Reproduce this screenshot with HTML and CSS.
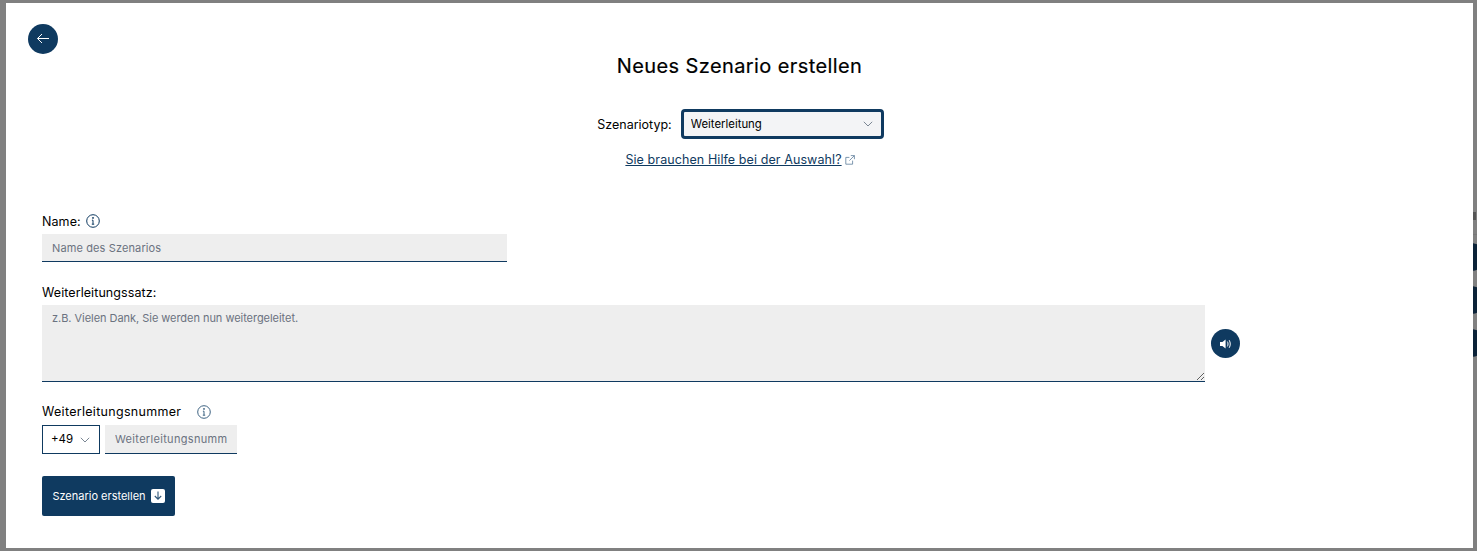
FILE: index.html
```html
<!DOCTYPE html>
<html lang="de">
<head>
<meta charset="utf-8">
<title>Neues Szenario erstellen</title>
<link rel="stylesheet" href="styles.css">
</head>
<body>
<main class="modal">
  <button class="back" type="button" aria-label="Zurück">
    <svg width="14" height="14" viewBox="0 0 14 14" fill="none" stroke="#fff" stroke-width="1"><path d="M13 6.5H1.5M6 2 1.5 6.5 6 11"/></svg>
  </button>
  <h1 class="title">Neues Szenario erstellen</h1>
  <div class="type-row">
    <label class="type-label" for="type">Szenariotyp:</label>
    <div class="select-wrap type-select">
      <select id="type"><option>Weiterleitung</option></select>
      <svg class="chevron" width="10" height="6" viewBox="0 0 10 6" fill="none" stroke="#7b8794"><path d="M.8.8 5 5l4.2-4.2"/></svg>
    </div>
  </div>
  <div class="help">
    <a href="#">Sie brauchen Hilfe bei der Auswahl?</a>
    <svg width="10" height="10" viewBox="0 0 10 10" fill="none" stroke="#5d7e9b" stroke-width=".8"><path d="M7.6 5.6v3.6H.8V2.4h3.6M5.8.6h3.6v3.6M9.4.6 4.4 5.6"/></svg>
  </div>
  <form class="form">
    <div class="label-row name-label">
      <label for="name">Name:</label>
      <svg class="info name-info" width="14" height="14" viewBox="0 0 14 14" fill="none" stroke="#0f3a60"><circle cx="7" cy="7" r="6.3"/><path d="M7 6.2v4M5.8 10.2h2.4M5.9 6.2H7"/><circle cx="7" cy="3.9" r=".5" fill="#0f3a60"/></svg>
    </div>
    <input class="field name-input" id="name" placeholder="Name des Szenarios">
    <label class="label-row sentence-label" for="sentence">Weiterleitungssatz:</label>
    <div class="sentence-row">
      <textarea class="field sentence" id="sentence" placeholder="z.B. Vielen Dank, Sie werden nun weitergeleitet."></textarea>
      <button class="speaker" type="button" aria-label="Anhören">
        <svg width="14" height="12" viewBox="0 0 14 12" fill="none"><path d="M1 4h2.4L6.6 1.4v9.2L3.4 8H1z" fill="#fff"/><path d="M8.4 3.6c.8 1.4.8 3.4 0 4.8M10.2 2.2c1.4 2.2 1.4 5.4 0 7.6" stroke="#fff" stroke-width="1"/></svg>
      </button>
    </div>
    <div class="label-row number-label">
      <label for="number">Weiterleitungsnummer</label>
      <svg class="info" width="14" height="14" viewBox="0 0 14 14" fill="none" stroke="#3f6483"><circle cx="7" cy="7" r="6.3"/><path d="M7 6.2v4M5.8 10.2h2.4M5.9 6.2H7"/><circle cx="7" cy="3.9" r=".5" fill="#3f6483"/></svg>
    </div>
    <div class="number-row">
      <div class="select-wrap prefix">
        <select aria-label="Vorwahl"><option>+49</option></select>
        <svg class="chevron" width="10" height="6" viewBox="0 0 10 6" fill="none" stroke="#7b8794"><path d="M.8.8 5 5l4.2-4.2"/></svg>
      </div>
      <input class="field number" id="number" placeholder="Weiterleitungsnummer">
    </div>
    <button class="submit" type="button">
      <span>Szenario erstellen</span>
      <svg width="14" height="14" viewBox="0 0 14 14"><rect width="14" height="14" rx="2" fill="#fff"/><path d="M7 2.5v7.5M3.8 7 7 10.2 10.2 7" fill="none" stroke="#2f5678" stroke-width="1.1"/></svg>
    </button>
  </form>
</main>
<aside class="peek" aria-hidden="true">
  <span class="peek-mark"></span>
  <span class="peek-dot"></span>
  <span class="peek-dot"></span>
  <span class="peek-dot"></span>
</aside>
</body>
</html>
```
FILE: styles.css
```css
* { box-sizing: border-box; }
html, body { margin: 0; height: 100%; }
body {
  display: flex;
  height: 551px;
  overflow: hidden;
  padding: 3px 0 3px 6px;
  background: #808080;
  font-family: Inter, "Liberation Sans", sans-serif;
  color: #000;
}
.modal {
  width: 1467px;
  height: 545px;
  flex: none;
  background: #fff;
  padding: 21px 36px 0 22px;
  display: flex;
  flex-direction: column;
}
.back {
  width: 30px;
  height: 30px;
  border: 0;
  padding: 0;
  border-radius: 50%;
  background: #0f3a60;
  display: flex;
  align-items: center;
  justify-content: center;
}
.title {
  margin: -1px 0 0 -22px;
  width: 1467px;
  font-size: 20px;
  line-height: 26px;
  font-weight: 400;
  text-align: center;
  letter-spacing: .4px;
  -webkit-text-stroke: .2px #000;
}
.type-row {
  display: flex;
  align-items: center;
  justify-content: center;
  gap: 9px;
  margin: 30px 0 0 -22px;
  padding-left: 2px;
  width: 1467px;
}
.type-label { font-size: 12.5px; }
.select-wrap { position: relative; }
.select-wrap select {
  appearance: none;
  width: 100%;
  height: 100%;
  margin: 0;
  font: inherit;
  color: #000;
}
.chevron { position: absolute; top: 50%; margin-top: -3px; pointer-events: none; }
.type-select { width: 203px; height: 30px; font-size: 11.4px; }
.type-select select {
  background: #f3f4f6;
  border: 3px solid #0f3a60;
  border-radius: 4px;
  padding: 0 0 0 7px;
}
.type-select .chevron { right: 11px; }
.help {
  margin: 12px 0 0 -22px;
  padding-left: 1px;
  width: 1467px;
  display: flex;
  justify-content: center;
  align-items: center;
  gap: 3px;
  font-size: 12.5px;
  line-height: 18px;
  letter-spacing: .09px;
}
.help a { color: #0f3a60; }
.form { display: flex; flex-direction: column; align-items: flex-start; padding-left: 14px; }
.label-row { display: flex; align-items: center; font-size: 12.5px; line-height: 18px; letter-spacing: .08px; }
.name-label { margin-top: 44px; gap: 5px; height: 18px; }
.name-info { margin-bottom: 2px; }
.name-input { width: 465px; height: 28px; margin-top: 3px; letter-spacing: .12px; }
.field {
  border: 0;
  border-bottom: 1px solid #0f3a60;
  border-radius: 0;
  background: #eee;
  font: inherit;
  font-size: 11px;
  padding: 0 10px;
  color: #000;
  outline: 0;
}
.field::placeholder { color: #6b7280; opacity: 1; }
.sentence-label { margin-top: 22px; }
.sentence-row { display: flex; align-items: center; gap: 6px; margin-top: 3px; }
.sentence { width: 1163px; height: 77px; padding: 6px 10px; display: block; letter-spacing: -.04px; }
.speaker {
  width: 29px;
  height: 29px;
  padding: 0;
  border: 0;
  border-radius: 50%;
  background: #0f3a60;
  display: flex;
  align-items: center;
  justify-content: center;
}
.number-label { margin-top: 21px; gap: 16px; letter-spacing: .3px; }
.number-row { display: flex; gap: 5px; margin-top: 4px; height: 29px; }
.prefix { width: 58px; font-size: 11.5px; }
.prefix select {
  background: #fff;
  border: 1px solid #0f3a60;
  border-radius: 0;
  padding: 0 0 2px 8px;
}
.prefix .chevron { right: 10px; }
.number { width: 132px; letter-spacing: .32px; }
.submit {
  margin-top: 22px;
  width: 133px;
  height: 40px;
  border: 0;
  border-radius: 2px;
  background: #0f3a60;
  color: #fff;
  font: inherit;
  font-size: 11px;
  display: flex;
  align-items: center;
  justify-content: center;
  gap: 5px;
  padding: 0;
}
.peek {
  flex: 1;
  display: flex;
  flex-direction: column;
  overflow: hidden;
}
.peek-mark {
  display: block;
  flex: none;
  height: 232px;
  border-bottom: 1px solid #777;
  background: linear-gradient(#555, #555) 0 209px / 3px 8px no-repeat;
}
.peek-dot {
  display: block;
  flex: none;
  width: 28px;
  height: 28px;
  margin: 8px 0 7px -16px;
  border-radius: 50%;
  background: #0b2238;
}
```
